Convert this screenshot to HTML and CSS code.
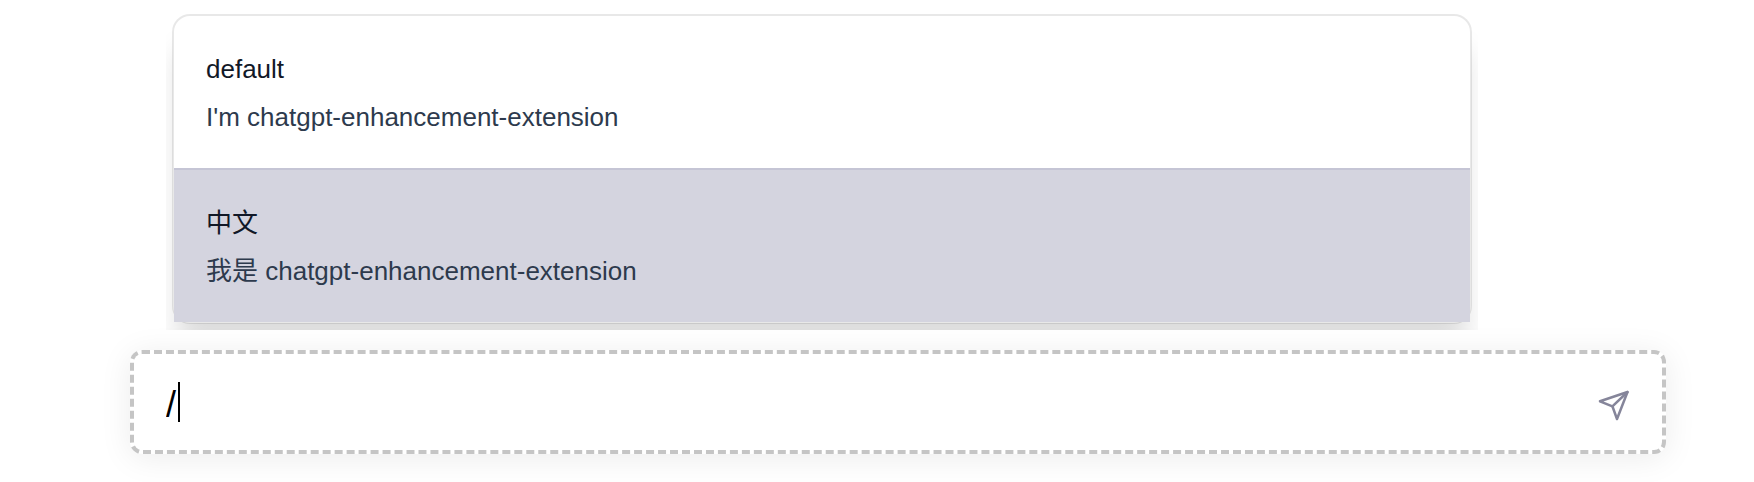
FILE: index.html
```html
<!DOCTYPE html>
<html lang="en">
<head>
<meta charset="utf-8">
<title>Prompt picker</title>
<link rel="stylesheet" href="styles.css">
</head>
<body>
<main class="chat">
  <div class="menu-clip">
    <ul class="menu">
      <li class="item">
        <span class="item-title">default</span>
        <span class="item-text">I'm chatgpt-enhancement-extension</span>
      </li>
      <li class="item item-active">
        <span class="item-title" lang="zh">中文</span>
        <span class="item-text">我是 chatgpt-enhancement-extension</span>
      </li>
    </ul>
  </div>
  <form class="composer">
    <div class="field">
      <input class="prompt" type="text" value="/" aria-label="Prompt">
      <span class="caret"></span>
    </div>
    <button class="send" type="button" aria-label="Send">
      <svg class="send-icon" viewBox="0 0 32 32" fill="none" stroke="currentColor" stroke-width="2.5" stroke-linecap="round" stroke-linejoin="round">
        <path d="M29.5 3 2 12.3l12.4 5L19 30z"/>
        <path d="M29.5 3 14.4 17.3"/>
      </svg>
    </button>
  </form>
</main>
</body>
</html>
```
FILE: styles.css
```css
* {
  box-sizing: border-box;
}

body {
  margin: 0;
  background: #fff;
  font-family: "Liberation Sans", "Noto Sans CJK SC", sans-serif;
}

.chat {
  min-height: 100vh;
  padding-bottom: 28px;
}

.menu-clip {
  position: relative;
  z-index: 1;
  margin: 0 276px 0 166px;
  padding: 14px 6px 6px;
  overflow: hidden;
}

.menu {
  margin: 0;
  padding: 0;
  list-style: none;
  border: 2px solid rgba(0, 0, 0, 0.09);
  border-radius: 18px;
  background: #fff;
  background-clip: padding-box;
  box-shadow: 0 28px 28px -6px rgba(0, 0, 0, 0.14);
}

.item {
  display: flex;
  flex-direction: column;
  padding: 29px 32px 27px;
  font-size: 26px;
  line-height: 48px;
}

.item-active {
  border-top: 2px solid #c5c5d5;
  background: #d4d4df;
}

.item-title {
  color: #111827;
}

.item-text {
  color: #2d3a4d;
}

.composer {
  display: flex;
  align-items: center;
  margin: 20px 88px 0 130px;
  padding: 28px 32px;
  border: 4px dashed #c5c5c5;
  border-radius: 12px;
  background: #fff;
  box-shadow: 0 4px 32px rgba(0, 0, 0, 0.08);
}

.field {
  position: relative;
  flex: 1;
}

.prompt {
  display: block;
  width: 100%;
  height: 40px;
  padding: 6px 0 0;
  border: 0;
  outline: 0;
  background: transparent;
  color: #000;
  font: inherit;
  font-size: 36px;
  line-height: 34px;
}

.caret {
  position: absolute;
  top: 0;
  left: 12px;
  width: 2px;
  height: 40px;
  background: #000;
}

.send {
  display: flex;
  padding: 6px 0 0;
  border: 0;
  background: none;
  color: #85859a;
}

.send-icon {
  width: 32px;
  height: 32px;
}
```
